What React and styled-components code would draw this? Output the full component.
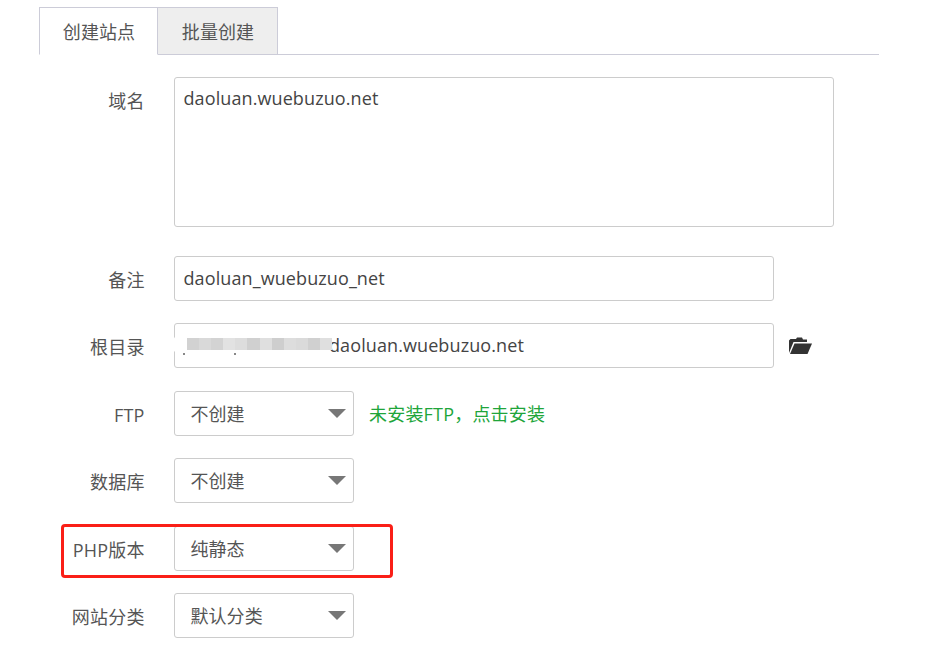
import React from "react";
import styled, { createGlobalStyle } from "styled-components";

const GlobalStyle = createGlobalStyle`
  html, body {
    margin: 0;
    padding: 0;
    background: #fff;
  }
  body {
    font-family: "Open Sans", "Noto Sans CJK SC", sans-serif;
    color: #555;
  }
`;

const Page = styled.div`
  position: relative;
  width: 929px;
  height: 672px;
  padding: 7px 50px 0 39px;
  box-sizing: border-box;
  overflow: hidden;
`;

const Tabs = styled.div`
  display: flex;
  height: 48px;
  box-sizing: border-box;
  border-bottom: 1px solid #ccccd8;
  margin-bottom: 22px;
`;

const Tab = styled.div`
  width: ${(props) => (props.active ? "119px" : "120px")};
  height: 48px;
  box-sizing: border-box;
  border: 1px solid #ccccd8;
  border-left-width: ${(props) => (props.active ? "1px" : "0")};
  border-bottom-color: ${(props) => (props.active ? "#fff" : "#ccccd8")};
  background: ${(props) => (props.active ? "#fff" : "#eee")};
  padding-left: 1px;
  font-size: 18px;
  line-height: 48px;
  letter-spacing: 0.1px;
  text-align: center;
  color: #555;
`;

const Form = styled.div`
  display: flex;
  flex-direction: column;
`;

const Row = styled.div`
  display: flex;
  align-items: ${(props) => (props.top ? "flex-start" : "center")};
  margin-bottom: ${(props) => props.gap}px;
`;

const Label = styled.div`
  width: 105.6px;
  height: 45px;
  margin-right: 29.4px;
  flex: none;
  font-size: 18px;
  line-height: 49px;
  letter-spacing: 0.2px;
  text-align: right;
  white-space: nowrap;
  color: #555;
`;

const Field = styled.div`
  position: relative;
  width: ${(props) => props.width}px;
  height: ${(props) => props.height}px;
  box-sizing: border-box;
  border: 1px solid #ccc;
  border-radius: 3px;
  background: #fff;
  padding: ${(props) => (props.area ? "8px 8.5px" : "0 8.5px")};
  font-size: 18px;
  line-height: ${(props) => (props.area ? "24px" : `${props.height - 3}px`)};
  letter-spacing: 0.1px;
  color: #444;
  white-space: nowrap;
`;

const PathText = styled.span`
  margin-left: 145.5px;
`;

const SelectBox = styled.div`
  position: relative;
  width: 180px;
  height: 45px;
  box-sizing: border-box;
  border: 1px solid #ccc;
  border-radius: 3px;
  background: #fff;
  padding-left: 15.4px;
  font-size: 18px;
  line-height: 44px;
  letter-spacing: 0.1px;
  color: #555;
`;

const Arrow = styled.span`
  position: absolute;
  right: 7px;
  top: 50%;
  margin-top: -5px;
  width: 0;
  height: 0;
  border-left: 9px solid transparent;
  border-right: 9px solid transparent;
  border-top: 9px solid #777;
`;

const Smear = styled.div`
  position: absolute;
  left: -3px;
  top: 10px;
  width: 160px;
  height: 21px;
  background: #fff;
  border-radius: 10px;
`;

const Mosaic = styled.div`
  position: absolute;
  left: 12px;
  top: 14px;
  display: flex;
`;

const Cell = styled.span`
  display: block;
  width: 12.1px;
  height: 12px;
  background: ${(props) => props.color};
`;

const Speck = styled.span`
  position: absolute;
  left: ${(props) => props.left}px;
  top: 29px;
  width: 2px;
  height: 2px;
  background: #888;
`;

const FolderIcon = styled.svg`
  width: 24px;
  height: 18px;
  margin-left: 14px;
  flex: none;
  fill: #333;
`;

const InstallLink = styled.span`
  margin-left: 15px;
  margin-bottom: 1px;
  font-size: 18px;
  letter-spacing: 0.2px;
  color: #20a53a;
`;

const Highlight = styled.div`
  position: absolute;
  left: 61px;
  top: 524px;
  width: 332px;
  height: 54px;
  box-sizing: border-box;
  border: 3px solid #fa1f17;
  border-radius: 4px;
`;

const mosaicColors = ["#d2d2d2", "#d9d9d9", "#d3d3d3", "#e2e2e2", "#dddddd", "#d0d0d0", "#dfdfdf", "#cecece", "#dddddd", "#dadada", "#d0d0d0", "#dfdfdf"];

const Select = ({ text }) => (
  <SelectBox>
    {text}
    <Arrow />
  </SelectBox>
);

const App = () => {
  return (
    <>
      <GlobalStyle />
      <Page>
        <Tabs>
          <Tab active>创建站点</Tab>
          <Tab>批量创建</Tab>
        </Tabs>
        <Form>
          <Row top gap={29}>
            <Label>域名</Label>
            <Field area width={660} height={150}>daoluan.wuebuzuo.net</Field>
          </Row>
          <Row gap={22}>
            <Label>备注</Label>
            <Field width={600} height={45}>daoluan_wuebuzuo_net</Field>
          </Row>
          <Row gap={23}>
            <Label>根目录</Label>
            <Field width={600} height={45}>
              <PathText>daoluan.wuebuzuo.net</PathText>
              <Smear />
              <Speck left={8} />
              <Speck left={59} />
              <Mosaic>
                {mosaicColors.map((color, i) => (
                  <Cell key={i} color={color} />
                ))}
              </Mosaic>
            </Field>
            <FolderIcon viewBox="0 0 24 18">
              <path d="M1 16V3.5L2.5 2H8l1-1.5h5L15 2.5h4V5H5.5L1 16z" />
              <path d="M6.5 6.5H24L19.5 17H2z" />
            </FolderIcon>
          </Row>
          <Row gap={22}>
            <Label>FTP</Label>
            <Select text="不创建" />
            <InstallLink>未安装FTP，点击安装</InstallLink>
          </Row>
          <Row gap={23}>
            <Label>数据库</Label>
            <Select text="不创建" />
          </Row>
          <Row gap={22}>
            <Label>PHP版本</Label>
            <Select text="纯静态" />
          </Row>
          <Row gap={0}>
            <Label>网站分类</Label>
            <Select text="默认分类" />
          </Row>
        </Form>
        <Highlight />
      </Page>
    </>
  );
};

export default App;
